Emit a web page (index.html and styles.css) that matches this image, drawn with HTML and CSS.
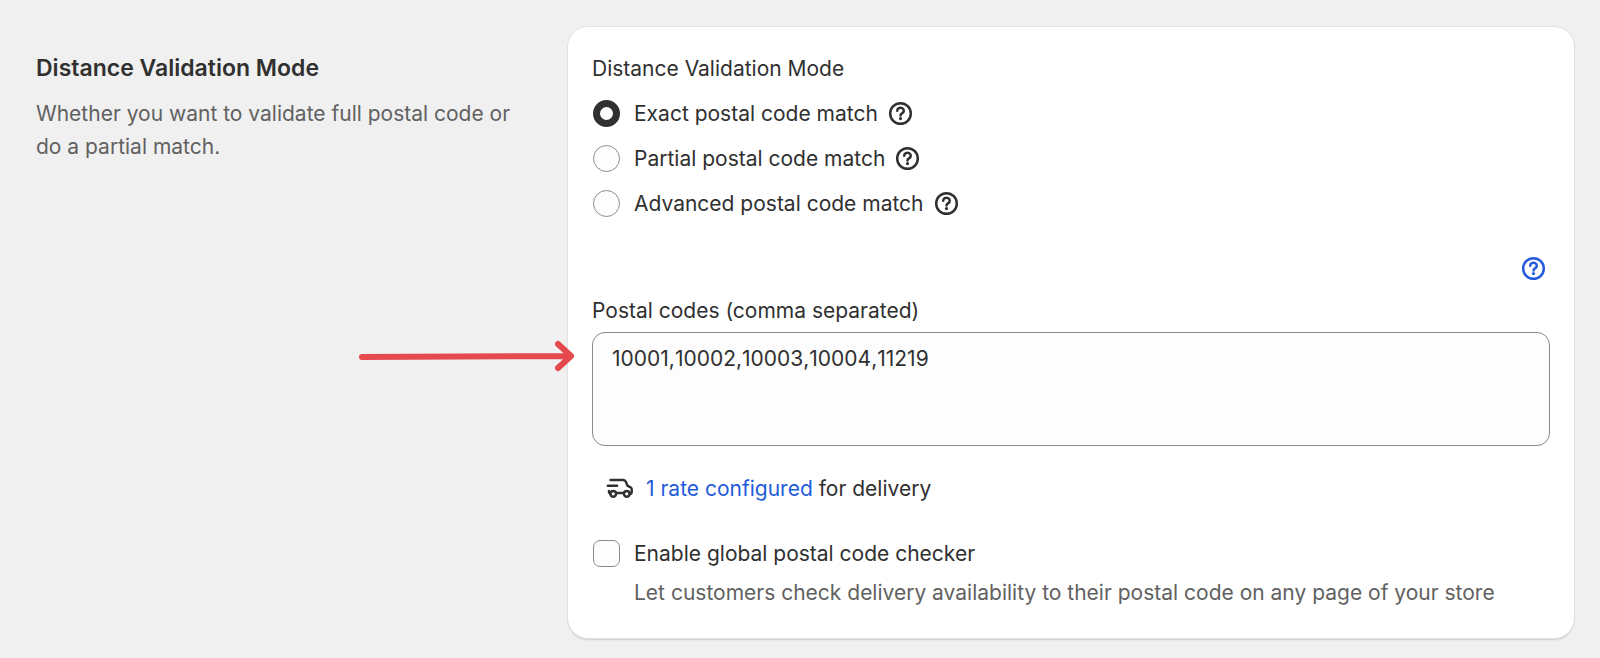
FILE: index.html
```html
<!DOCTYPE html>
<html lang="en">
<head>
    <meta charset="UTF-8">
    <meta name="viewport" content="width=device-width, initial-scale=1.0">
    <title>Distance Validation Mode</title>
    <link rel="stylesheet" href="styles.css">
</head>
<body>
    <!-- Shared icons -->
    <svg class="sprite" aria-hidden="true">
        <symbol id="icon-help" viewBox="0 0 20 20">
            <circle cx="10" cy="10" r="6.25"/>
            <path d="M8 8.3a2 1.8 0 1 1 3.1 1.5c-.7.4-1.1.7-1.1 1.4"/>
            <circle class="dot" cx="10" cy="13.1" r=".95"/>
        </symbol>
        <symbol id="icon-truck" viewBox="0 0 20 20">
            <path d="M4 4.9h7.6c.8 0 1.4.4 1.7 1.1l1 2.4 1.6.7c.6.3.9.8.9 1.5v1.3c0 .8-.4 1.3-1.2 1.4"/>
            <path d="M2.3 8.4h5.6"/>
            <path d="M3.8 13c-.5-.1-.8-.6-.8-1.5M7.4 12.7h4.6"/>
            <circle cx="5.6" cy="13.2" r="1.75"/>
            <circle cx="13.8" cy="13.2" r="1.75"/>
        </symbol>
    </svg>

    <main class="section">
        <div class="annotation">
            <h2>Distance Validation Mode</h2>
            <p>Whether you want to validate full postal code or do a partial match.</p>
        </div>

        <form class="card">
            <fieldset class="choices">
                <legend>Distance Validation Mode</legend>
                <div class="choice">
                    <input type="radio" name="mode" id="modeExact" checked>
                    <label for="modeExact">Exact postal code match</label>
                    <button type="button" class="help" aria-label="About exact match"><svg class="icon"><use href="#icon-help"/></svg></button>
                </div>
                <div class="choice">
                    <input type="radio" name="mode" id="modePartial">
                    <label for="modePartial">Partial postal code match</label>
                    <button type="button" class="help" aria-label="About partial match"><svg class="icon"><use href="#icon-help"/></svg></button>
                </div>
                <div class="choice">
                    <input type="radio" name="mode" id="modeAdvanced">
                    <label for="modeAdvanced">Advanced postal code match</label>
                    <button type="button" class="help" aria-label="About advanced match"><svg class="icon"><use href="#icon-help"/></svg></button>
                </div>
            </fieldset>

            <div class="card-help">
                <a href="#" class="help-link" aria-label="Help"><svg class="icon"><use href="#icon-help"/></svg></a>
            </div>

            <div class="field">
                <label for="postalCodes">Postal codes (comma separated)</label>
                <div class="field-control">
                    <textarea id="postalCodes" spellcheck="false">10001,10002,10003,10004,11219</textarea>
                    <svg class="arrow" viewBox="0 0 216 32" aria-hidden="true">
                        <path d="M3 17L211 16M199 4L212 16L199 28"/>
                    </svg>
                </div>
            </div>

            <div class="rates">
                <svg class="icon"><use href="#icon-truck"/></svg>
                <p><a href="#">1 rate configured</a> for delivery</p>
            </div>

            <div class="checker">
                <div class="choice">
                    <input type="checkbox" id="globalChecker" aria-describedby="checkerHelp">
                    <label for="globalChecker">Enable global postal code checker</label>
                </div>
                <p class="help-text" id="checkerHelp">Let customers check delivery availability to their postal code on any page of your store</p>
            </div>
        </form>
    </main>
</body>
</html>
```
FILE: styles.css
```css
* {
    box-sizing: border-box;
}

body {
    margin: 0;
    background-color: #f0f0f0;
    color: #303030;
    font-family: Inter, sans-serif;
    font-size: 21px;
    font-weight: 400;
    line-height: 33px;
}

h2,
p {
    margin: 0;
}

a {
    color: #245bdb;
    text-decoration: none;
}

.sprite {
    position: absolute;
    width: 0;
    height: 0;
}

.icon {
    display: block;
    flex: none;
    width: 33px;
    height: 33px;
    fill: none;
    stroke: currentColor;
    stroke-width: 1.5;
    stroke-linecap: round;
    stroke-linejoin: round;
}

.dot {
    fill: currentColor;
    stroke: none;
}

.section {
    display: grid;
    grid-template-columns: 1fr 2fr;
    align-items: start;
    gap: 29px;
    padding: 27px 26px 18px 36px;
}

.annotation {
    display: flex;
    flex-direction: column;
    gap: 12px;
    padding: 25px 20px 0 0;
}

.annotation h2 {
    font-size: 23px;
    font-weight: 600;
    line-height: 33px;
}

.annotation p,
.help-text {
    color: #616161;
}

.card {
    padding: 25px 24px 29px;
    background-color: #fff;
    border-radius: 20px;
    box-shadow: 0 0 0 1px #e0e0e0, 0 2px 2px rgba(0, 0, 0, 0.15);
}

.choices {
    display: flex;
    flex-direction: column;
    gap: 12px;
    margin: 0;
    padding: 0;
    border: 0;
}

.choices legend {
    margin-bottom: 12px;
    padding: 0;
}

.choice {
    display: flex;
    align-items: center;
    height: 33px;
}

.choice input {
    appearance: none;
    flex: none;
    width: 27px;
    height: 27px;
    margin: 0 14px 0 1px;
    background-color: #fdfdfd;
    border: 1px solid #8a8a8a;
}

.choice input[type="radio"] {
    border-radius: 50%;
}

.choice input[type="radio"]:checked {
    background-color: #fff;
    border: 7px solid #303030;
}

.choice input[type="checkbox"] {
    border-radius: 7px;
}

.help {
    margin: 0 0 0 6px;
    padding: 0;
    background: none;
    border: 0;
    color: inherit;
    cursor: pointer;
}

.card-help {
    display: flex;
    justify-content: flex-end;
    margin-top: 32px;
}

.field {
    display: flex;
    flex-direction: column;
    gap: 5px;
    margin-top: 9px;
}

.field-control {
    position: relative;
}

.field textarea {
    display: block;
    width: 100%;
    height: 114px;
    padding: 9px 19px;
    background-color: #fdfdfd;
    border: 1px solid #8a8a8a;
    border-radius: 13px;
    color: inherit;
    font: inherit;
    font-kerning: none;
    resize: none;
}

/* Red arrow pointing at the postal codes box */
.arrow {
    position: absolute;
    top: 8px;
    right: 100%;
    width: 216px;
    height: 32px;
    margin-right: 17px;
    fill: none;
    stroke: #e5484d;
    stroke-width: 6;
    stroke-linecap: round;
    stroke-linejoin: round;
}

.rates {
    display: flex;
    gap: 9px;
    margin-top: 26px;
    padding-left: 12px;
}

.checker {
    display: flex;
    flex-direction: column;
    gap: 6px;
    margin-top: 32px;
}

.help-text {
    padding-left: 42px;
}
```
